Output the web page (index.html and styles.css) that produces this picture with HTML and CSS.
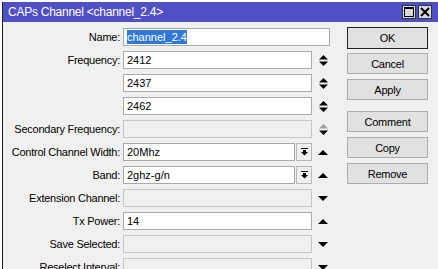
FILE: index.html
```html
<!DOCTYPE html>
<html lang="en">
<head>
    <meta charset="UTF-8">
    <title>CAPs Channel</title>
    <link rel="stylesheet" href="styles.css">
</head>
<body>
    <div class="window">
        <div class="titlebar">
            <span class="title">CAPs Channel &lt;channel_2.4&gt;</span>
            <div class="title-buttons">
                <span class="tb-btn">
                    <svg width="10" height="10" viewBox="0 0 10 10"><rect x="0.5" y="0.5" width="9" height="9" fill="none" stroke="#000"/><rect x="0" y="0" width="10" height="2" fill="#000"/></svg>
                </span>
                <span class="tb-btn">
                    <svg width="10" height="10" viewBox="0 0 10 10"><path d="M1 1 L9 9 M9 1 L1 9" stroke="#000" stroke-width="2"/></svg>
                </span>
            </div>
        </div>

        <div class="content">
            <div class="form">
                <label>Name:</label>
                <div class="input wide"><span class="selected">channel_2.4</span></div>

                <label>Frequency:</label>
                <div class="input">2412</div>
                <span class="arrow"><svg width="9" height="11" viewBox="0 0 9 11"><polygon points="0,4.5 4.5,0 9,4.5" fill="#000"/><polygon points="0,6.5 9,6.5 4.5,11" fill="#000"/></svg></span>

                <label></label>
                <div class="input">2437</div>
                <span class="arrow"><svg width="9" height="11" viewBox="0 0 9 11"><polygon points="0,4.5 4.5,0 9,4.5" fill="#000"/><polygon points="0,6.5 9,6.5 4.5,11" fill="#000"/></svg></span>

                <label></label>
                <div class="input">2462</div>
                <span class="arrow"><svg width="9" height="11" viewBox="0 0 9 11"><polygon points="0,4.5 4.5,0 9,4.5" fill="#000"/><polygon points="0,6.5 9,6.5 4.5,11" fill="#000"/></svg></span>

                <label>Secondary Frequency:</label>
                <div class="input disabled"></div>
                <span class="arrow"><svg width="9" height="11" viewBox="0 0 9 11"><polygon points="0,4.5 4.5,0 9,4.5" fill="#a0a0a0"/><polygon points="0,6.5 9,6.5 4.5,11" fill="#000"/></svg></span>

                <label>Control Channel Width:</label>
                <div class="combo">
                    <div class="input">20Mhz</div>
                    <span class="drop"><svg width="7" height="8" viewBox="0 0 7 8"><rect x="0" y="0" width="7" height="1" fill="#000"/><rect x="2" y="2" width="3" height="2" fill="#000"/><polygon points="0,4 7,4 3.5,7.5" fill="#000"/></svg></span>
                </div>
                <span class="arrow"><svg width="10" height="5" viewBox="0 0 10 5"><polygon points="0,5 5,0 10,5" fill="#000"/></svg></span>

                <label>Band:</label>
                <div class="combo">
                    <div class="input">2ghz-g/n</div>
                    <span class="drop"><svg width="7" height="8" viewBox="0 0 7 8"><rect x="0" y="0" width="7" height="1" fill="#000"/><rect x="2" y="2" width="3" height="2" fill="#000"/><polygon points="0,4 7,4 3.5,7.5" fill="#000"/></svg></span>
                </div>
                <span class="arrow"><svg width="10" height="5" viewBox="0 0 10 5"><polygon points="0,5 5,0 10,5" fill="#000"/></svg></span>

                <label>Extension Channel:</label>
                <div class="input disabled"></div>
                <span class="arrow"><svg width="10" height="5" viewBox="0 0 10 5"><polygon points="0,0 10,0 5,5" fill="#000"/></svg></span>

                <label>Tx Power:</label>
                <div class="input">14</div>
                <span class="arrow"><svg width="10" height="5" viewBox="0 0 10 5"><polygon points="0,5 5,0 10,5" fill="#000"/></svg></span>

                <label>Save Selected:</label>
                <div class="input disabled"></div>
                <span class="arrow"><svg width="10" height="5" viewBox="0 0 10 5"><polygon points="0,0 10,0 5,5" fill="#000"/></svg></span>

                <label>Reselect Interval:</label>
                <div class="input disabled"></div>
                <span class="arrow"><svg width="10" height="5" viewBox="0 0 10 5"><polygon points="0,0 10,0 5,5" fill="#000"/></svg></span>
            </div>

            <div class="actions">
                <button class="default">OK</button>
                <button>Cancel</button>
                <button>Apply</button>
                <button class="group">Comment</button>
                <button>Copy</button>
                <button>Remove</button>
            </div>
        </div>
    </div>
</body>
</html>
```

FILE: styles.css
```css
body {
    margin: 0;
    padding-top: 2px;
    background-color: #FFFFFF;
    font-family: "Liberation Sans", Arial, sans-serif;
    font-size: 11px;
    letter-spacing: -0.25px;
    color: #000;
    overflow: hidden;
}
.window {
    margin-left: 2px;
    border-left: 1px solid #222;
    background-color: #F0F0F0;
    height: 300px;
}
.titlebar {
    height: 20px;
    background-color: #4F4FC6;
    color: #FFFFFF;
    display: flex;
    align-items: center;
    justify-content: space-between;
    padding: 0 6px 0 5px;
}
.title {
    font-size: 12px;
}
.title-buttons {
    display: flex;
    gap: 2px;
}
.tb-btn {
    width: 14px;
    height: 14px;
    box-sizing: border-box;
    background-color: #D8D8D8;
    border: 1px solid #333;
    display: flex;
    align-items: center;
    justify-content: center;
}
.content {
    display: flex;
    align-items: flex-start;
}
.form {
    display: grid;
    grid-template-columns: 120px 189px 21px;
    grid-auto-rows: 18px;
    row-gap: 5px;
    padding-top: 6px;
}
.form label {
    text-align: right;
    padding-right: 3px;
    line-height: 18px;
    white-space: nowrap;
}
.input {
    box-sizing: border-box;
    height: 18px;
    border: 1px solid #A9A9A9;
    background-color: #FFFFFF;
    padding-left: 3px;
    line-height: 16px;
    letter-spacing: 0;
    white-space: nowrap;
}
.input.wide {
    grid-column: span 2;
    width: 207px;
}
.input.disabled {
    background-color: #F0F0F0;
    border-color: #C6C6C6;
}
.selected {
    background-color: #3178D6;
    color: #FFFFFF;
    padding: 1px 0;
}
.combo {
    display: flex;
    gap: 1px;
}
.combo .input {
    width: 172px;
}
.drop {
    box-sizing: border-box;
    width: 16px;
    height: 18px;
    border: 1px solid #B8B8B8;
    display: flex;
    align-items: center;
    justify-content: center;
}
.arrow {
    display: flex;
    align-items: center;
    justify-content: center;
    padding-left: 1px;
}
.actions {
    display: flex;
    flex-direction: column;
    margin-left: 14px;
    padding-top: 5px;
}
button {
    width: 81px;
    height: 21px;
    margin: 0 0 5px 0;
    padding: 0;
    font-family: inherit;
    font-size: 11px;
    letter-spacing: -0.25px;
    color: #000;
    background-color: #E1E1E1;
    border: 1px solid #ADADAD;
}
button.default {
    height: 22px;
    margin-bottom: 4px;
    border-color: #222;
}
button.group {
    margin-top: 6px;
}
```
